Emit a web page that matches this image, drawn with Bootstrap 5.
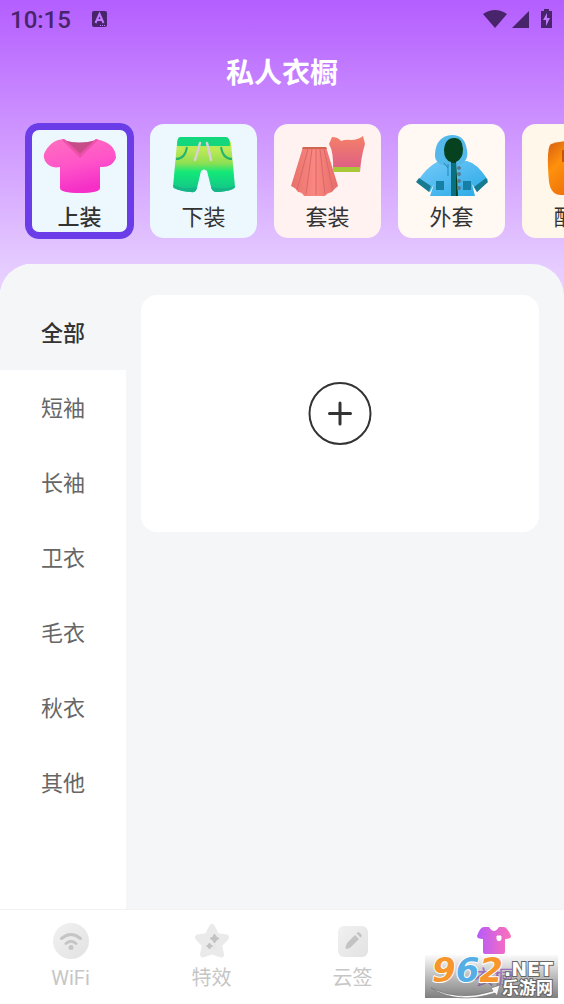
<!DOCTYPE html>
<html lang="zh-CN">
<head>
<meta charset="utf-8">
<meta name="viewport" content="width=device-width, initial-scale=1">
<title>私人衣橱</title>
<link href="https://cdn.jsdelivr.net/npm/bootstrap@5.3.0/dist/css/bootstrap.min.css" rel="stylesheet">
<style>
body{font-family:Roboto,"Noto Sans CJK SC",sans-serif;background:#fff;color:#333}
.app{min-height:100vh;background:linear-gradient(#b45eff 0,#cc90ff 120px,#e5caff 264px,#ead4ff 300px) no-repeat}
.status{height:40px;padding:0 10px;color:#48246b;font-size:24px;line-height:40px;font-weight:500}
.title{font-size:28px;line-height:40px;font-weight:700;margin:14px 0 29px;color:#fff}
.cats{gap:17px;padding:1px 26px 26px;overflow:hidden}
.cat{width:107px;height:114px;border:0;border-radius:14px;padding:3px 0 0;background:#edf8fe;color:#333;font-size:22px;line-height:32px}
.cat svg{display:block;margin:0 auto 2px;width:80px;height:68px}
.cat.active{width:109px;height:116px;margin:-1px;padding-top:4px;box-shadow:inset 0 0 0 7px #6b3de8;font-weight:500}
.cat.rose{background:#fff2f0}.cat.cream{background:#fff8f3}.cat.sand{background:#fff8ea}
.panel{background:#f4f6f8;border-radius:32px 32px 0 0;overflow:hidden}
.side{width:126px;background:#fff}
.side a{display:block;height:75px;line-height:78px;text-align:center;color:#666;font-size:22px;text-decoration:none}
.side a.active{background:#f4f6f8;height:106px;padding-top:31px;color:#333;font-weight:500}
.content{padding:31px 25px 25px 15px}
.add-area{height:237px;border-radius:16px;background:#fff}
.add{width:64px;height:64px;padding:0;border:0;background:none}
.tabs{height:95px;background:#fff;border-top:1px solid #f1f2f4}
.tabs a{flex:1 1 0;padding-top:11px;text-align:center;color:#c6c6c6;font-size:20px;line-height:30px;text-decoration:none}
.tabs svg{display:block;width:40px;height:40px;margin:0 auto 2px}
.tabs a.active{color:#ad66e6}
.mark-box{right:6px;bottom:6px;width:133px;height:43px;background:linear-gradient(rgba(210,210,210,.1),rgba(105,105,105,.85));pointer-events:none}
.mark-box svg{display:block;width:133px;height:43px;overflow:visible}
.digits{font:italic bold 34px "DejaVu Sans",sans-serif;stroke:#fff;stroke-width:2px;paint-order:stroke;stroke-linejoin:round}
.net{font:bold 19px "DejaVu Sans",sans-serif;fill:#fff;stroke:#666;stroke-width:2px;paint-order:stroke}
.site{font:bold 17px "Noto Sans CJK SC",sans-serif;fill:#fff;stroke:#666;stroke-width:2px;paint-order:stroke}
</style>
</head>
<body>
<div class="app d-flex flex-column position-relative">
  <header>
    <div class="status d-flex align-items-center">
      <span>10:15</span>
      <svg class="ms-3" width="26" height="20" viewBox="0 0 26 20" aria-hidden="true"><rect x="5" y="1" width="15" height="16" rx="2" fill="#48246b"/><path d="M8.500 13l4-9 4 9M10 10h5" fill="none" stroke="#c27bff" stroke-width="2"/><path d="M13 15.500h5" stroke="#c27bff" stroke-dasharray="1 1"/></svg>
      <svg class="ms-auto" width="72" height="22" viewBox="0 0 72 22" fill="#48246b" aria-hidden="true"><path d="M1 5Q13-3 25 5L13 19zM30 19L47 2v17z"/><path d="M62 0h5v2h3v17H59V2h3z"/><path d="M65 4l-4 7h3v6l4-8h-3z" fill="#c27bff"/></svg>
    </div>
    <h1 class="title text-center">私人衣橱</h1>
    <nav class="cats d-flex" aria-label="分类">
      <button class="cat active flex-shrink-0" type="button">
        <svg viewBox="0 0 80 68"><defs><linearGradient id="tee" x1="0" y1="0" x2=".3" y2="1"><stop stop-color="#ff70bd"/><stop offset=".55" stop-color="#ff54c9"/><stop offset="1" stop-color="#f52fc7"/></linearGradient></defs><path d="M24 8Q39 13 56 8L40 25z" fill="#c64b88"/><path d="M24 7Q10 8 4 22Q3 25 5 29Q10 37 20 35L20 56Q20 61 40 61Q60 61 60 56L60 35Q72 36 76 26Q76 11 56 7L40 22z" fill="url(#tee)"/><path d="M24 7l-2 1 18 18 18-18-2-1-16 15z" fill="#ee4fab"/></svg>上装</button>
      <button class="cat flex-shrink-0" type="button">
        <svg viewBox="0 0 80 68"><defs><linearGradient id="short" x2="0" y2="1"><stop offset=".2" stop-color="#bde957"/><stop offset=".45" stop-color="#8fdf52"/><stop offset=".62" stop-color="#13e878"/><stop offset="1" stop-color="#13c28b"/></linearGradient></defs><path d="M15 7H63Q66 7 67 11L71 55Q70 59 53 60Q48 60 47 55L43 39Q40 36 37 39L33 56Q32 61 27 60Q10 58 9 55L13 11Q13 7 15 7z" fill="url(#short)"/><path d="M16 5H62Q66 5 66 14H13Q13 5 16 5z" fill="#13d77c"/><path d="M23 15Q21 27 12 27M57 15Q59 27 68 27" fill="none" stroke="#24b46c" stroke-width="2"/><path d="M36 11L31 28M43 11L47 28" stroke="#d9cfd9" stroke-width="2.500" stroke-linecap="round"/><path d="M9 53Q19 58 33 55Q32 61 27 60Q10 59 9 53zM47 55Q60 58 71 54Q70 59 53 60Q48 60 47 55z" fill="#16b587"/></svg>下装</button>
      <button class="cat rose flex-shrink-0" type="button">
        <svg viewBox="0 0 80 68"><defs><linearGradient id="skirt" x2="1"><stop stop-color="#e9706b"/><stop offset=".5" stop-color="#fa8780"/><stop offset="1" stop-color="#e76c69"/></linearGradient><linearGradient id="top" x2="0" y2="1"><stop stop-color="#f38168"/><stop offset="1" stop-color="#dd5b88"/></linearGradient></defs><path d="M15 15H38L50 54Q46 57 44 60Q39 61 37 64L16 64Q14 60 10 60Q8 56 3 54z" fill="url(#skirt)"/><path d="M20 17L9 58M24 17L18 62M28 17V63M32 17L37 62M36 17L45 58" stroke="#d9686a" stroke-width="1" fill="none"/><path d="M15 15H38L39 17H14z" fill="#d0664f"/><path d="M44 5Q50 5 53 9Q58 7 63 8Q70 8 75 4L77 12Q73 25 72 40H45Q46 20 41 12z" fill="url(#top)"/><path d="M45 35H72V40H45z" fill="#a8c83a"/></svg>套装</button>
      <button class="cat cream flex-shrink-0" type="button">
        <svg viewBox="0 0 80 68"><defs><linearGradient id="coat" x2="1" y2="1"><stop stop-color="#76cafa"/><stop offset="1" stop-color="#29a9e5"/></linearGradient></defs><path d="M25 30Q15 35 5 50L18 60L22 52L18 64H63L60 52L65 60L76 48Q65 31 55 29z" fill="url(#coat)"/><path d="M7 46L19 54L17 60L4 50zM74 46L62 55L65 60L76 50z" fill="#167b91"/><path d="M40 3Q24 4 23 22Q22 34 40 35Q58 32 55 18Q53 3 40 3z" fill="#55b8eb"/><path d="M42 6Q33 6 32 18Q32 28 39 30V64H46L44 30Q51 27 51 17Q50 5 42 6z" fill="#06421f"/><path d="M39 31V64H44V31" fill="#08707e"/><path d="M24 49h8v9h-8zM51 49h8v9h-8z" fill="#157fa5"/><path d="M36 32v12M32 31l4 5" stroke="#2287b8"/><g fill="#557995"><circle cx="47" cy="36" r="2"/><circle cx="47" cy="42" r="2"/><circle cx="47" cy="49" r="2"/><circle cx="47" cy="56" r="2"/></g></svg>外套</button>
      <button class="cat sand flex-shrink-0" type="button">
        <svg viewBox="0 0 80 68"><defs><linearGradient id="bag" x2="1" y2="1"><stop stop-color="#d45c12"/><stop offset=".3" stop-color="#ff910c"/><stop offset="1" stop-color="#dd5208"/></linearGradient></defs><path d="M15 12Q40 5 65 12Q70 15 67 50Q65 62 55 63H25Q15 63 13 50Q10 15 15 12z" fill="url(#bag)"/><path d="M28 18v10h24V18" fill="none" stroke="#c65407" stroke-width="4"/></svg>配饰</button>
    </nav>
  </header>
  <main class="panel d-flex flex-grow-1">
    <nav class="side flex-shrink-0" aria-label="子分类">
      <a class="active" href="#">全部</a><a href="#">短袖</a><a href="#">长袖</a><a href="#">卫衣</a><a href="#">毛衣</a><a href="#">秋衣</a><a href="#">其他</a>
    </nav>
    <section class="content flex-grow-1">
      <div class="add-area d-flex align-items-center justify-content-center">
        <button class="add" type="button" aria-label="添加"><svg class="d-block" width="64" height="64" viewBox="0 0 64 64" fill="none" stroke="#333"><circle cx="32" cy="31.500" r="30.500" stroke-width="2"/><path d="M32 21v21M21.500 31.500h21" stroke-width="3" stroke-linecap="round"/></svg></button>
      </div>
    </section>
  </main>
  <nav class="tabs d-flex" aria-label="主导航">
    <a href="#"><svg viewBox="0 0 40 40"><defs><linearGradient id="gray" x2="1" y2="1"><stop stop-color="#f1f1f1"/><stop offset="1" stop-color="#e2e2e2"/></linearGradient></defs><circle cx="20" cy="20" r="18" fill="url(#gray)"/><path d="M10.500 17.500Q20 9.500 29.500 17.500M15 22.500Q20 18 25 22.500" fill="none" stroke="#c5c5c5" stroke-width="3" stroke-linecap="round"/><circle cx="20" cy="26.500" r="2.500" fill="#c5c5c5"/></svg>WiFi</a>
    <a href="#"><svg viewBox="0 0 40 40"><path d="M20 6l4.500 9 9.500 1.500-7 7.500 2 9.500-9-3-9 3 2-9.500L6 16.500 15.500 15z" fill="url(#gray)" stroke="#eaeaea" stroke-width="6" stroke-linejoin="round"/><path d="M22.500 13q1 3.500 4.500 4.500-3.500 1-4.500 4.500-1-3.500-4.500-4.500 3.500-1 4.500-4.500zM17.500 22q1 2.500 3 3-2 .5-3 3-1-2.500-3-3 2-.5 3-3z" fill="#c2c2c2" stroke="#c2c2c2" stroke-linejoin="round"/></svg>特效</a>
    <a href="#"><svg viewBox="0 0 40 40"><rect x="5" y="5" width="30" height="31" rx="6" fill="url(#gray)"/><path d="M22 14l4 4-8 8q-2 2-5.500 2 0-3.500 2-6.500zM23.500 12.500l1-1q1-1 3 1t1 3l-1 1z" fill="#c3c3c3"/></svg>云签</a>
    <a class="active" href="#"><svg viewBox="0 0 40 40"><defs><linearGradient id="shirt" x2="1"><stop stop-color="#b65bfa"/><stop offset="1" stop-color="#ff70b7"/></linearGradient></defs><path d="M10 6H15Q20 14 25 6H30Q33 6 37 15Q37 18 31 18V31Q31 33 29 33H11Q9 33 9 31V18Q3 18 3 15Q6 6 10 6z" fill="url(#shirt)"/><path d="M23 15h4v3.500q-2 3-4 0z" fill="#fff" stroke="#fff" stroke-linejoin="round"/></svg>衣橱</a>
  </nav>
  <div class="mark-box position-absolute">
    <svg viewBox="0 0 133 43"><path d="M6 33Q34 47 68 36L66 33L75 30L72 41L70 38Q32 50 6 33z" fill="#f8f8f8" stroke="#777" stroke-width=".7"/><text class="digits" x="7" y="27"><tspan fill="#f7962c">9</tspan><tspan fill="#55aee5">6</tspan><tspan fill="#f7962c">2</tspan></text><text class="net" x="79" y="21">.NET</text><text class="site" x="77" y="39">乐游网</text></svg>
  </div>
</div>
<script src="https://cdn.jsdelivr.net/npm/bootstrap@5.3.0/dist/js/bootstrap.bundle.min.js"></script>
</body>
</html>
